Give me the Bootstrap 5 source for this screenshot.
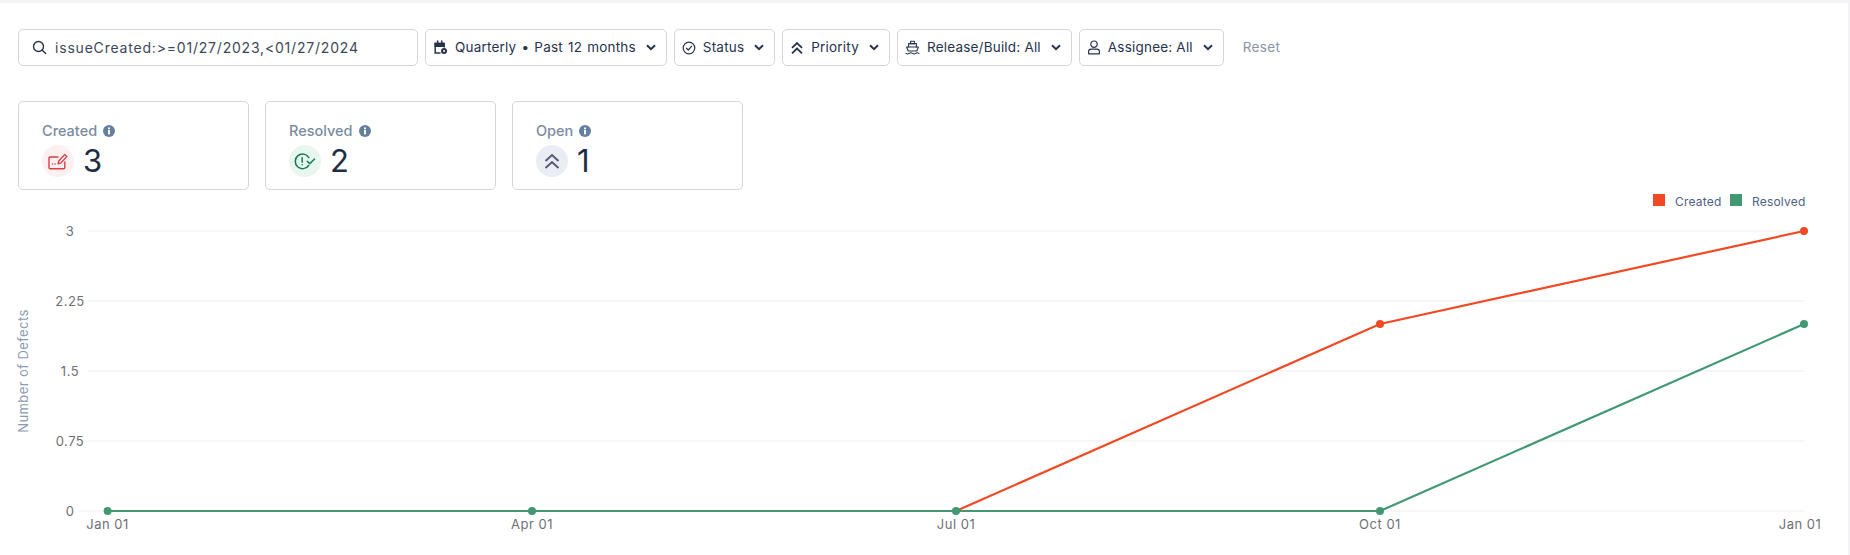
<!doctype html>
<html lang="en">
<head>
<meta charset="utf-8">
<title>Defects</title>
<link rel="stylesheet" href="https://cdn.jsdelivr.net/npm/bootstrap@5.3.0/dist/css/bootstrap.min.css">
<style>
html,body{height:100%;overflow:hidden}
body{font-family:Inter,"Liberation Sans",sans-serif;background:#fff;color:#1f2d45}
.page-wrap{height:555px;border-top:3px solid #f3f3f5;border-right:2px solid #f3f3f5;padding-top:26px}
.filter-bar{padding-left:18px;gap:7px;height:37px}
.search-box{width:400px;height:37px;border:1px solid #d5d6da;border-radius:5px;padding:0 13px;gap:8px;font-size:14px;letter-spacing:.8px;color:#3c4858}
.filter-btn{height:37px;border:1px solid #d5d6da;border-radius:5px;padding:0 10px 0 7px;gap:7px;font-size:13.5px;font-weight:400;letter-spacing:.2px;color:#26334d;background:#fff;white-space:nowrap}
.filter-btn:hover{border-color:#d5d6da;color:#26334d;background:#fff}
.wide-words{word-spacing:1.1px}
.filter-ico{flex:none;color:#26334d}
.caret-ico{flex:none;margin-left:3px}
.reset-link{font-size:13.5px;font-weight:400;color:#8a94a3;margin-left:12px;text-decoration:none;letter-spacing:.3px}
.stat-row{padding-left:18px;gap:16px;margin-top:35px;height:89px}
.stat-tile{width:231px;height:89px;border:1px solid #d5d6da;border-radius:5px;padding:19px 23px 0}
.stat-label{font-size:14.5px;font-weight:500;color:#7b8b9f;line-height:20px;gap:6px}
.stat-body{gap:9px;margin-top:4px}
.stat-circle{width:32px;height:32px;border-radius:50%;flex:none}
.tint-red{background:#fdf0f0}
.tint-green{background:#e8f6ef}
.tint-slate{background:#ebedf4}
.stat-num{font-size:31px;line-height:32px;color:#1f2d45}
.chart-svg{display:block;width:1848px;height:365px}
.tick{font-family:Inter,"Liberation Sans",sans-serif;font-size:13px;fill:#6f7075;letter-spacing:.5px}
.axis-title{font-family:Inter,"Liberation Sans",sans-serif;font-size:13px;fill:#8b9bb0;letter-spacing:.4px}
.legend-text{font-family:Inter,"Liberation Sans",sans-serif;font-size:12px;fill:#4f5f85;letter-spacing:.2px}
</style>
</head>
<body>
<div class="page-wrap">
  <div class="filter-bar d-flex align-items-center">
    <div class="search-box d-flex align-items-center">
      <svg class="filter-ico" width="15" height="15" viewBox="0 0 15 15" fill="none" stroke="currentColor" stroke-width="1.4" stroke-linecap="round"><circle cx="6.5" cy="6.5" r="5"/><path d="M10.3 10.3 13.6 13.6"/></svg>
      <span>issueCreated:&gt;=01/27/2023,&lt;01/27/2024</span>
    </div>
    <button type="button" class="btn filter-btn d-flex align-items-center">
      <svg class="filter-ico" width="15" height="15" viewBox="0 0 15 15" fill="none" stroke="currentColor" stroke-width="1.5" stroke-linecap="round"><path d="M7 13H2.2V3.4h9V7"/><path d="M2.2 3.4h9V6.2h-9z" fill="currentColor"/><path d="M4.6 1v2M8.8 1v2"/><circle cx="11" cy="11" r="3" fill="currentColor" stroke="none"/><circle cx="11" cy="11" r="1" fill="#fff" stroke="none"/></svg>
      <span class="wide-words">Quarterly • Past 12 months</span>
      <svg class="caret-ico" width="10" height="7" viewBox="0 0 10 7" fill="none" stroke="currentColor" stroke-width="2"><path d="M1 1.2 5 5.2 9 1.2"/></svg>
    </button>
    <button type="button" class="btn filter-btn d-flex align-items-center">
      <svg class="filter-ico" width="14" height="14" viewBox="0 0 14 14" fill="none" stroke="currentColor" stroke-width="1.2" stroke-linecap="round" stroke-linejoin="round"><circle cx="7" cy="7" r="5.8"/><path d="M4.4 7.2 6.3 9 9.7 5.2"/></svg>
      <span>Status</span>
      <svg class="caret-ico" width="10" height="7" viewBox="0 0 10 7" fill="none" stroke="currentColor" stroke-width="2"><path d="M1 1.2 5 5.2 9 1.2"/></svg>
    </button>
    <button type="button" class="btn filter-btn d-flex align-items-center">
      <svg class="filter-ico" width="14" height="14" viewBox="0 0 14 14" fill="none" stroke="currentColor" stroke-width="1.8"><path d="M2 6.8 7 2l5 4.8M2 12.4 7 7.6l5 4.8"/></svg>
      <span>Priority</span>
      <svg class="caret-ico" width="10" height="7" viewBox="0 0 10 7" fill="none" stroke="currentColor" stroke-width="2"><path d="M1 1.2 5 5.2 9 1.2"/></svg>
    </button>
    <button type="button" class="btn filter-btn d-flex align-items-center">
      <svg class="filter-ico" width="15" height="15" viewBox="0 0 15 15" fill="none" stroke="currentColor" stroke-width="1.1" stroke-linejoin="round" stroke-linecap="round"><path d="M5.6 1.2h3.8v2.4H5.6z"/><path d="M3.6 7V3.6h7.8V7"/><path d="M1.6 7h11.8l-1.6 4H3.2z"/><path d="M1 13.4q1.6 1.2 3.2 0t3.3 0 3.3 0 3.2 0"/></svg>
      <span>Release/Build: All</span>
      <svg class="caret-ico" width="10" height="7" viewBox="0 0 10 7" fill="none" stroke="currentColor" stroke-width="2"><path d="M1 1.2 5 5.2 9 1.2"/></svg>
    </button>
    <button type="button" class="btn filter-btn d-flex align-items-center">
      <svg class="filter-ico" width="14" height="15" viewBox="0 0 14 15" fill="none" stroke="currentColor" stroke-width="1.2" stroke-linejoin="round"><circle cx="7" cy="4.2" r="3.2"/><path d="M1.6 13.8v-2.2q0-2.4 2.4-2.4h6q2.4 0 2.4 2.4v2.2z"/></svg>
      <span>Assignee: All</span>
      <svg class="caret-ico" width="10" height="7" viewBox="0 0 10 7" fill="none" stroke="currentColor" stroke-width="2"><path d="M1 1.2 5 5.2 9 1.2"/></svg>
    </button>
    <a class="reset-link" href="#">Reset</a>
  </div>

  <div class="stat-row d-flex">
    <div class="stat-tile">
      <div class="stat-label d-flex align-items-center"><span>Created</span>
        <svg width="12" height="12" viewBox="0 0 12 12"><circle cx="6" cy="6" r="6" fill="#64809f"/><rect x="5" y="5" width="2" height="4.4" fill="#fff"/><rect x="5" y="2.5" width="2" height="1.7" fill="#fff"/></svg>
      </div>
      <div class="stat-body d-flex align-items-center">
        <div class="stat-circle tint-red d-flex align-items-center justify-content-center">
          <svg width="20" height="17" viewBox="0 0 20 17" fill="none" stroke="#df3a45" stroke-width="1.4" stroke-linecap="round" stroke-linejoin="round"><path d="M10 4H2.2Q1 4 1 5.2v9.4Q1 15.8 2.2 15.8h13.4q1.2 0 1.2-1.2V9"/><path d="M10.2 10.8 10.8 8 16.6 1.6l2.2 2-5.8 6.3z"/><path d="M4.5 11h.1M7 11h.1"/></svg>
        </div>
        <div class="stat-num">3</div>
      </div>
    </div>
    <div class="stat-tile">
      <div class="stat-label d-flex align-items-center"><span>Resolved</span>
        <svg width="12" height="12" viewBox="0 0 12 12"><circle cx="6" cy="6" r="6" fill="#64809f"/><rect x="5" y="5" width="2" height="4.4" fill="#fff"/><rect x="5" y="2.5" width="2" height="1.7" fill="#fff"/></svg>
      </div>
      <div class="stat-body d-flex align-items-center">
        <div class="stat-circle tint-green d-flex align-items-center justify-content-center">
          <svg width="22" height="17" viewBox="0 0 21 16" fill="none" stroke="#0f7a55" stroke-width="1.4" stroke-linecap="round" stroke-linejoin="round"><path d="M14.2 4.2A7 7 0 1 0 14 11.8"/><path d="M7.8 4.4v4.2M7.8 11v.2"/><path d="M12.6 7.8l2.4 2.4 4.6-4.6"/></svg>
        </div>
        <div class="stat-num">2</div>
      </div>
    </div>
    <div class="stat-tile">
      <div class="stat-label d-flex align-items-center"><span>Open</span>
        <svg width="12" height="12" viewBox="0 0 12 12"><circle cx="6" cy="6" r="6" fill="#64809f"/><rect x="5" y="5" width="2" height="4.4" fill="#fff"/><rect x="5" y="2.5" width="2" height="1.7" fill="#fff"/></svg>
      </div>
      <div class="stat-body d-flex align-items-center">
        <div class="stat-circle tint-slate d-flex align-items-center justify-content-center">
          <svg width="16" height="17" viewBox="0 0 16 17" fill="none" stroke="#565a78" stroke-width="2"><path d="M1.5 8 8 2l6.5 6M1.5 15 8 9l6.5 6"/></svg>
        </div>
        <div class="stat-num">1</div>
      </div>
    </div>
  </div>

  <svg class="chart-svg" viewBox="0 190 1848 365" xmlns="http://www.w3.org/2000/svg">
    <path d="M78 231H1804M78 301H1804M78 371H1804M78 441H1804M78 511H1804" stroke="#f3f3f3" stroke-width="1.5"/>
    <g fill="#fff">
      <rect x="52" y="222" width="36" height="18"/><rect x="52" y="292" width="36" height="18"/><rect x="52" y="362" width="36" height="18"/><rect x="52" y="432" width="36" height="18"/><rect x="52" y="502" width="26" height="18"/>
    </g>
    <g class="tick" text-anchor="middle">
      <text x="70" y="236">3</text>
      <text x="70" y="306">2.25</text>
      <text x="70" y="376">1.5</text>
      <text x="70" y="446">0.75</text>
      <text x="70" y="516">0</text>
    </g>
    <g class="tick" text-anchor="middle">
      <text x="107.6" y="529">Jan 01</text>
      <text x="532" y="529">Apr 01</text>
      <text x="956" y="529">Jul 01</text>
      <text x="1380" y="529">Oct 01</text>
      <text x="1800" y="529">Jan 01</text>
    </g>
    <text class="axis-title" text-anchor="middle" transform="translate(28 371) rotate(-90)">Number of Defects</text>

    <polyline points="107.6,511 532,511 956,511 1380,324 1804,231" fill="none" stroke="#f04923" stroke-width="2.2"/>
    <polyline points="107.6,511 532,511 956,511 1380,511 1804,324" fill="none" stroke="#419873" stroke-width="2.2"/>
    <g fill="#f04923"><circle cx="1380" cy="324" r="4"/><circle cx="1804" cy="231" r="4"/></g>
    <g fill="#419873"><circle cx="107.6" cy="511" r="4"/><circle cx="532" cy="511" r="4"/><circle cx="956" cy="511" r="4"/><circle cx="1380" cy="511" r="4"/><circle cx="1804" cy="324" r="4"/></g>

    <rect x="1653" y="194" width="12" height="12" fill="#f04923"/>
    <text class="legend-text" x="1675" y="206">Created</text>
    <rect x="1730" y="194" width="12" height="12" fill="#419873"/>
    <text class="legend-text" x="1752" y="206">Resolved</text>
  </svg>
</div>
<script src="https://cdn.jsdelivr.net/npm/bootstrap@5.3.0/dist/js/bootstrap.bundle.min.js"></script>
</body>
</html>
